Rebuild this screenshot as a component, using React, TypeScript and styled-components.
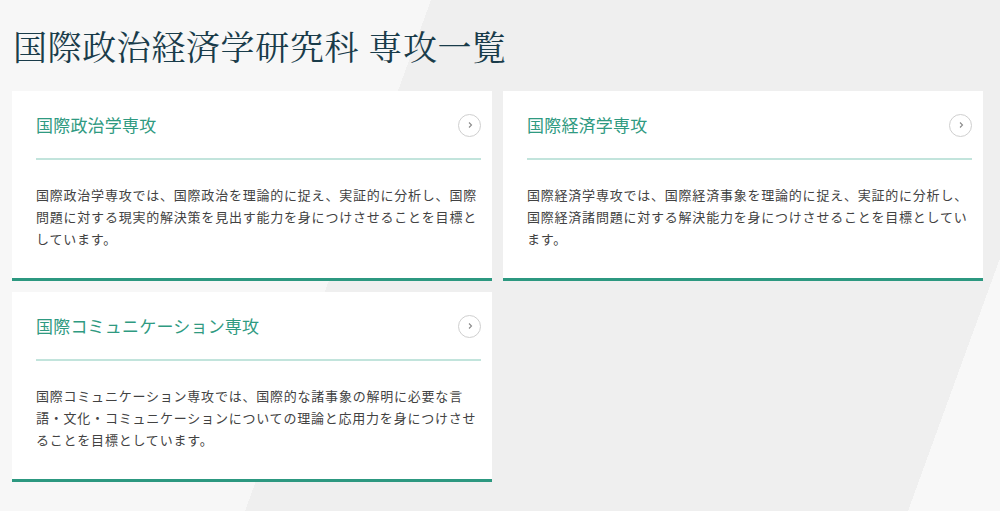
import styled, { createGlobalStyle } from 'styled-components';

const GlobalStyle = createGlobalStyle`
  html, body {
    margin: 0;
    padding: 0;
  }
  body {
    font-family: 'Noto Sans CJK JP', 'Noto Sans', sans-serif;
  }
`;

const Page = styled.main`
  box-sizing: border-box;
  width: 100%;
  min-height: 100vh;
  padding: 29px 12px 0;
  background: linear-gradient(
    110deg,
    #f7f7f7 0 405px,
    #efefef 405px 1028px,
    #f8f8f8 1028px
  );
`;

const Title = styled.h1`
  margin: 0 0 28px 1px;
  font-family: 'Noto Serif CJK JP', 'Liberation Serif', 'Noto Sans CJK JP', serif;
  font-size: 34px;
  line-height: 34px;
  font-weight: 400;
  color: #1a3c4a;
  letter-spacing: 0.6px;
`;

const Grid = styled.section`
  display: grid;
  grid-template-columns: 480px 480px;
  gap: 11px;
`;

const Card = styled.article`
  box-sizing: border-box;
  height: 190px;
  padding: 22px 11px 28px 24px;
  background: #fff;
  border-bottom: 3px solid #2c9880;
  display: flex;
  flex-direction: column;
`;

const Header = styled.div`
  display: flex;
  align-items: center;
  justify-content: space-between;
  height: 24px;
  padding-bottom: 21px;
  border-bottom: 2px solid #c2e4dc;
`;

const Heading = styled.h2`
  margin: 0;
  font-size: 17px;
  line-height: 24px;
  font-weight: 400;
  color: #2f9a81;
  letter-spacing: 0.2px;
`;

const Arrow = styled.span`
  box-sizing: border-box;
  width: 23px;
  height: 23px;
  border: 1px solid #cfcfcf;
  border-radius: 50%;
  display: flex;
  align-items: center;
  justify-content: center;
  color: #8a8a8a;
`;

const Text = styled.p`
  margin: 24px 0 0;
  font-size: 13px;
  line-height: 22px;
  letter-spacing: 0.78px;
  color: #424242;
`;

const majors = [
  {
    name: '国際政治学専攻',
    text: '国際政治学専攻では、国際政治を理論的に捉え、実証的に分析し、国際問題に対する現実的解決策を見出す能力を身につけさせることを目標としています。',
  },
  {
    name: '国際経済学専攻',
    text: '国際経済学専攻では、国際経済事象を理論的に捉え、実証的に分析し、国際経済諸問題に対する解決能力を身につけさせることを目標としています。',
  },
  {
    name: '国際コミュニケーション専攻',
    text: '国際コミュニケーション専攻では、国際的な諸事象の解明に必要な言語・文化・コミュニケーションについての理論と応用力を身につけさせることを目標としています。',
  },
];

const App = () => {
  return (
    <>
      <GlobalStyle />
      <Page>
        <Title>国際政治経済学研究科 専攻一覧</Title>
        <Grid>
          {majors.map((m) => (
            <Card key={m.name}>
              <Header>
                <Heading>{m.name}</Heading>
                <Arrow>
                  <svg width="8" height="8" viewBox="0 0 8 8" fill="none">
                    <path d="M3 1.5 L5.5 4 L3 6.5" stroke="currentColor" strokeWidth="1.1" />
                  </svg>
                </Arrow>
              </Header>
              <Text>{m.text}</Text>
            </Card>
          ))}
        </Grid>
      </Page>
    </>
  );
};

export default App;
